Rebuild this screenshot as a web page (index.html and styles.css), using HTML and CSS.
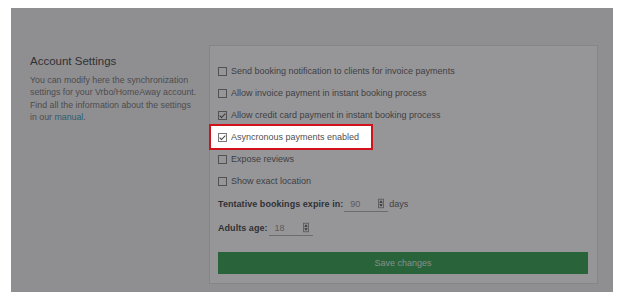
FILE: index.html
```html
<!DOCTYPE html>
<html lang="en">
<head>
  <meta charset="UTF-8" />
  <title>Account Settings</title>
  <link rel="stylesheet" href="styles.css">
</head>
<body>
  <div class="page">
    <div class="overlay"></div>

    <div class="intro">
      <h2>Account Settings</h2>
      <p>You can modify here the synchronization settings for your Vrbo/HomeAway account. Find all the information about the settings in our <a href="#">manual</a>.</p>
    </div>

    <form class="panel">
      <label class="check"><input type="checkbox"> Send booking notification to clients for invoice payments</label>
      <label class="check"><input type="checkbox"> Allow invoice payment in instant booking process</label>
      <label class="check"><input type="checkbox" checked> Allow credit card payment in instant booking process</label>
      <label class="check spotlight"><input type="checkbox" checked> Asyncronous payments enabled</label>
      <label class="check"><input type="checkbox"> Expose reviews</label>
      <label class="check"><input type="checkbox"> Show exact location</label>

      <div class="field">
        <label>Tentative bookings expire in:</label>
        <span class="number">
          <input type="text" value="90">
          <svg class="spin" width="7" height="11" viewBox="0 0 7 11"><rect x="0.5" y="0.5" width="6" height="10" fill="#eee" stroke="#888"/><path d="M1.5 4.5 L3.5 2 L5.5 4.5 Z M1.5 6.5 L3.5 9 L5.5 6.5 Z" fill="#333"/></svg>
        </span>
        days
      </div>
      <div class="field">
        <label>Adults age:</label>
        <span class="number">
          <input type="text" value="18">
          <svg class="spin" width="7" height="11" viewBox="0 0 7 11"><rect x="0.5" y="0.5" width="6" height="10" fill="#eee" stroke="#888"/><path d="M1.5 4.5 L3.5 2 L5.5 4.5 Z M1.5 6.5 L3.5 9 L5.5 6.5 Z" fill="#333"/></svg>
        </span>
      </div>

      <button type="button" class="save">Save changes</button>
    </form>
  </div>
</body>
</html>
```

FILE: styles.css
```css
body {
  margin: 0;
  background: #fff;
  font-family: "Liberation Sans", Arial, sans-serif;
}
.page {
  position: relative;
  display: flex;
  box-sizing: border-box;
  width: 602px;
  height: 284px;
  margin: 8px 9px 0 11px;
  padding: 37px 15px 8px 19px;
  background: #f1f1f1;
}
.overlay {
  position: absolute;
  inset: 0;
  z-index: 1;
  background: rgba(45, 45, 52, 0.5);
}
.intro {
  width: 169px;
  margin-right: 10px;
  padding-top: 9px;
}
.intro h2 {
  margin: 0 0 6px;
  font-size: 11.5px;
  font-weight: normal;
  line-height: 14px;
  color: #333;
}
.intro p {
  margin: 0;
  font-size: 8.8px;
  line-height: 12.3px;
  color: #6a6a6a;
}
.intro a {
  color: #1e8fb0;
  text-decoration: none;
}
.panel {
  display: flex;
  flex-direction: column;
  align-items: flex-start;
  box-sizing: border-box;
  width: 389px;
  margin: 0;
  padding: 14px 9px 9px 8px;
  border: 1px solid #ddd;
  background: #fff;
}
.check {
  display: flex;
  align-items: center;
  gap: 4px;
  height: 22px;
  font-size: 9px;
  color: #505050;
}
.check input {
  appearance: none;
  position: relative;
  box-sizing: border-box;
  width: 9px;
  height: 9px;
  margin: 0;
  border: 1px solid #777;
  background: #fff;
}
.check input:checked::after {
  content: "";
  position: absolute;
  left: 2px;
  top: 0;
  width: 2px;
  height: 5px;
  border: solid #444;
  border-width: 0 1.2px 1.2px 0;
  transform: rotate(45deg);
}
.spotlight {
  position: relative;
  z-index: 2;
  margin-left: -7px;
  padding: 0 12px 0 7px;
  background: #fff;
  outline: 2px solid #d0121b;
}
.field {
  display: flex;
  align-items: center;
  height: 24px;
  font-size: 9px;
  color: #505050;
}
.field label {
  margin-right: 1px;
  font-weight: bold;
  letter-spacing: 0.05px;
  color: #333;
}
.number {
  display: flex;
  align-items: center;
  box-sizing: border-box;
  width: 44px;
  height: 15px;
  margin-right: 1px;
  border-bottom: 1px solid #aaa;
}
.number input {
  width: 28px;
  padding: 0 0 0 6px;
  border: 0;
  background: transparent;
  font: inherit;
  color: #888;
}
.spin {
  margin-left: auto;
  margin-right: 4px;
}
.save {
  align-self: stretch;
  height: 22px;
  margin-top: 12px;
  border: 0;
  background: #23993f;
  color: rgba(255, 255, 255, 0.85);
  font: 9px "Liberation Sans", Arial, sans-serif;
}
```
